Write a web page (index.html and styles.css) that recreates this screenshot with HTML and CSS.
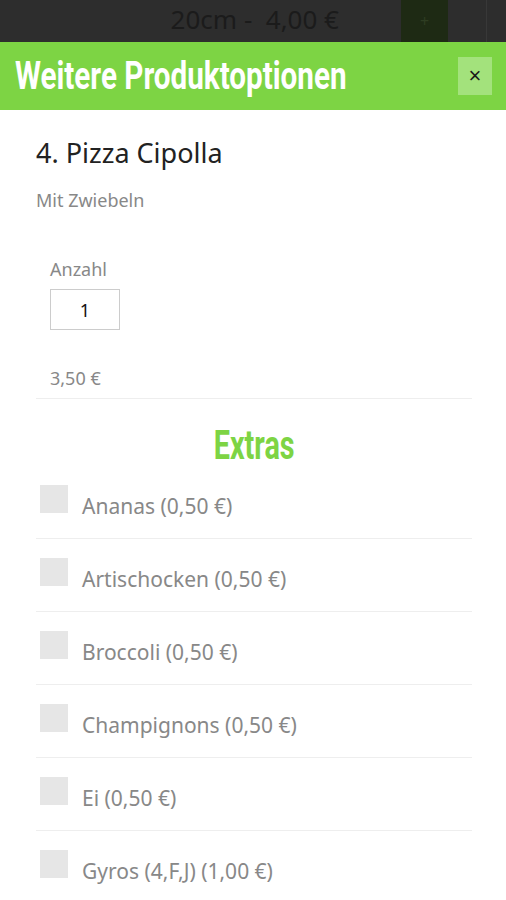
FILE: index.html
```html
<!DOCTYPE html>
<html lang="de">
  <head>
    <meta charset="UTF-8" />
    <meta name="viewport" content="width=device-width, initial-scale=1.0" />
    <title>Weitere Produktoptionen</title>
    <link rel="stylesheet" href="styles.css">
  </head>
  <body>
    <div class="page-behind">
      <div class="size-label">20cm - &nbsp;4,00 €</div>
      <div class="add-btn">+</div>
      <div class="behind-gap"></div>
    </div>

    <div class="modal">
      <div class="modal-header">
        <h1><span>Weitere Produktoptionen</span></h1>
        <button type="button" class="close-btn">×</button>
      </div>

      <div class="modal-body">
        <h2 class="product-name">4. Pizza Cipolla</h2>
        <p class="product-desc">Mit Zwiebeln</p>

        <div class="qty-group">
          <label for="qty">Anzahl</label>
          <input type="text" id="qty" class="qty-input" value="1" />
          <div class="price">3,50 €</div>
        </div>

        <h3 class="extras-title"><span>Extras</span></h3>

        <ul class="extras">
          <li><span class="check"></span><span class="extra-name">Ananas (0,50 €)</span></li>
          <li><span class="check"></span><span class="extra-name">Artischocken (0,50 €)</span></li>
          <li><span class="check"></span><span class="extra-name">Broccoli (0,50 €)</span></li>
          <li><span class="check"></span><span class="extra-name">Champignons (0,50 €)</span></li>
          <li><span class="check"></span><span class="extra-name">Ei (0,50 €)</span></li>
          <li><span class="check"></span><span class="extra-name">Gyros (4,F,J) (1,00 €)</span></li>
        </ul>
      </div>
    </div>
  </body>
</html>
```

FILE: styles.css
```css
body {
  margin: 0;
  font-family: 'Noto Sans', 'Open Sans', sans-serif;
  background: #fff;
  overflow: hidden;
}

/* darkened page under the modal */
.page-behind {
  height: 42px;
  background: #2d2d2d;
  display: flex;
  align-items: stretch;
}

.size-label {
  flex: 1;
  text-align: right;
  padding-right: 62px;
  line-height: 38px;
  font-size: 26px;
  color: #1b1b1b;
}

.add-btn {
  width: 47px;
  background: #1e2a14;
  color: #2e3d22;
  text-align: center;
  line-height: 42px;
  font-size: 16px;
}

.behind-gap {
  width: 38px;
  margin-right: 19px;
  border-right: 1px solid #383838;
}

/* modal */
.modal-header {
  height: 68px;
  background: #7dd444;
  display: flex;
  align-items: center;
  justify-content: space-between;
  padding: 0 14px 0 15px;
}

.modal-header h1 {
  margin: 0;
  flex: 1;
  color: #fff;
  font-family: Roboto, 'Noto Sans', sans-serif;
  font-weight: bold;
  font-size: 39px;
  line-height: 68px;
  white-space: nowrap;
}

.modal-header h1 span {
  display: inline-block;
  transform: scaleX(0.76);
  transform-origin: left center;
}

.close-btn {
  width: 34px;
  height: 38px;
  border: none;
  background: #a3e27c;
  color: #1a1a1a;
  font-size: 22px;
  padding: 0;
  cursor: pointer;
}

.modal-body {
  padding: 0 34px 0 36px;
}

.product-name {
  margin: 24px 0 0;
  font-weight: normal;
  font-size: 27px;
  line-height: 38px;
  color: #222;
}

.product-desc {
  margin: 16px 0 0;
  font-size: 18px;
  line-height: 24px;
  color: #888;
}

.qty-group {
  padding: 45px 14px 8px;
  border-bottom: 1px solid #eee;
}

.qty-group label {
  display: block;
  font-size: 18px;
  line-height: 24px;
  color: #888;
}

.qty-input {
  display: block;
  margin-top: 8px;
  width: 70px;
  height: 41px;
  box-sizing: border-box;
  border: 1px solid #ccc;
  text-align: center;
  font-family: inherit;
  font-size: 18px;
  color: #111;
  padding: 0;
}

.price {
  margin-top: 36px;
  font-size: 18px;
  line-height: 24px;
  color: #888;
}

.extras-title {
  margin: 27px 0 0;
  text-align: center;
  font-family: Roboto, 'Noto Sans', sans-serif;
  font-weight: bold;
  font-size: 40px;
  line-height: 40px;
  color: #7dd444;
}

.extras-title span {
  display: inline-block;
  transform: scaleX(0.72);
}

.extras {
  list-style: none;
  margin: 0;
  padding: 0;
}

.extras li {
  display: flex;
  align-items: flex-start;
  height: 73px;
  box-sizing: border-box;
  padding-top: 19px;
  border-bottom: 1px solid #eee;
}

.check {
  width: 28px;
  height: 28px;
  background: #e6e6e6;
  margin: 0 14px 0 4px;
  flex-shrink: 0;
}

.extra-name {
  margin-top: 7px;
  font-size: 21px;
  line-height: 28px;
  color: #888;
}
```
